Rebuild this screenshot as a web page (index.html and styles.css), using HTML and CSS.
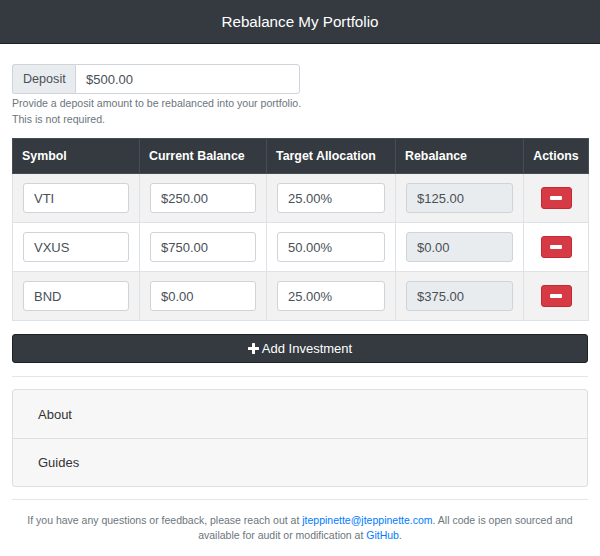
FILE: index.html
```html
<!DOCTYPE html>
<html>
<head>
<meta charset="utf-8">
<link rel="stylesheet" href="styles.css">
</head>
<body>
<header class="topbar">Rebalance My Portfolio</header>
<main class="page">
  <div class="deposit">
    <span class="addon">Deposit</span>
    <input class="field deposit-field" value="$500.00">
  </div>
  <p class="help">Provide a deposit amount to be rebalanced into your portfolio.<br>This is not required.</p>

  <table class="grid">
    <colgroup>
      <col class="c1"><col class="c2"><col class="c3"><col class="c4"><col class="c5">
    </colgroup>
    <thead>
      <tr><th>Symbol</th><th>Current Balance</th><th>Target Allocation</th><th>Rebalance</th><th class="center">Actions</th></tr>
    </thead>
    <tbody>
      <tr class="odd">
        <td><input class="field" value="VTI"></td>
        <td><input class="field" value="$250.00"></td>
        <td><input class="field" value="25.00%"></td>
        <td><input class="field ro" value="$125.00" readonly></td>
        <td class="center"><button class="del"><span class="bar"></span></button></td>
      </tr>
      <tr>
        <td><input class="field" value="VXUS"></td>
        <td><input class="field" value="$750.00"></td>
        <td><input class="field" value="50.00%"></td>
        <td><input class="field ro" value="$0.00" readonly></td>
        <td class="center"><button class="del"><span class="bar"></span></button></td>
      </tr>
      <tr class="odd">
        <td><input class="field" value="BND"></td>
        <td><input class="field" value="$0.00"></td>
        <td><input class="field" value="25.00%"></td>
        <td><input class="field ro" value="$375.00" readonly></td>
        <td class="center"><button class="del"><span class="bar"></span></button></td>
      </tr>
    </tbody>
  </table>

  <button class="add"><svg class="plus" width="11" height="11" viewBox="0 0 11 11"><rect x="4" y="0" width="3" height="11" rx="0.5" fill="#fff"/><rect x="0" y="4" width="11" height="3" rx="0.5" fill="#fff"/></svg>Add Investment</button>

  <hr class="rule">

  <div class="accordion">
    <div class="acc-item">About</div>
    <div class="acc-item">Guides</div>
  </div>

  <hr class="rule rule2">

  <p class="footer">If you have any questions or feedback, please reach out at <a href="#">jteppinette@jteppinette.com</a>. All code is open sourced and available for audit or modification at <a href="#">GitHub</a>.</p>
</main>
</body>
</html>
```

FILE: styles.css
```css
* { box-sizing: border-box; }
html, body { margin: 0; padding: 0; background: #fff; }
body {
  font-family: "Liberation Sans", Arial, sans-serif;
  color: #212529;
  font-size: 13px;
}
.topbar {
  height: 44px;
  background: #343a40;
  border-bottom: 1px solid #1d2124;
  color: #fff;
  font-size: 15.2px;
  display: flex;
  align-items: center;
  justify-content: center;
}
.page { padding: 20px 12px 0; }
.deposit {
  display: flex;
  width: 288px;
  height: 30px;
}
.addon {
  display: flex;
  align-items: center;
  padding: 0 10px;
  width: 63px;
  background: #e9ecef;
  border: 1px solid #ced4da;
  border-right: none;
  border-radius: 3px 0 0 3px;
  color: #495057;
  font-size: 12.6px;
}
.field {
  display: block;
  width: 100%;
  height: 30px;
  border: 1px solid #ced4da;
  border-radius: 3px;
  padding: 0 10px;
  font-family: inherit;
  font-size: 13px;
  color: #495057;
  background: #fff;
  outline: none;
}
.deposit-field { flex: 1; border-radius: 0 3px 3px 0; }
.field.ro { background: #e9ecef; }
.help {
  margin: 1px 0 0;
  font-size: 10.6px;
  line-height: 16px;
  color: #6c757d;
}
.grid {
  margin-top: 11px;
  width: 576px;
  border-collapse: collapse;
  table-layout: fixed;
}
.c1 { width: 127px; } .c2 { width: 127px; } .c3 { width: 129px; } .c4 { width: 128px; } .c5 { width: 65px; }
.grid th {
  background: #343a40;
  color: #fff;
  border: 1px solid #454d55;
  height: 35px;
  padding: 0 9px;
  text-align: left;
  font-size: 12.4px;
  font-weight: bold;
}
.grid td {
  border: 1px solid #dee2e6;
  padding: 9px 10px;
  height: 49px;
}
.grid tr.odd td { background: #f2f2f2; }
.grid .center { text-align: center; }
.del {
  width: 31px;
  height: 22px;
  background: #d63a45;
  border: 1px solid #c42a35;
  border-radius: 3px;
  padding: 0;
  display: inline-flex;
  align-items: center;
  justify-content: center;
  vertical-align: middle;
}
.bar {
  width: 12px;
  height: 4px;
  background: #fff;
  border-radius: 1px;
}
.add {
  margin-top: 13px;
  width: 100%;
  height: 29px;
  background: #343a40;
  border: 1px solid #1d2124;
  border-radius: 3px;
  color: #fff;
  font-family: inherit;
  font-size: 13px;
  display: flex;
  align-items: center;
  justify-content: center;
  gap: 3px;
}
.plus { display: block; }
.rule {
  margin: 13px 0 0;
  border: 0;
  border-top: 1px solid #e5e5e5;
}
.accordion {
  margin-top: 12px;
  border: 1px solid #dfdfdf;
  border-radius: 3px;
  background: #f7f7f7;
}
.acc-item {
  height: 48px;
  display: flex;
  align-items: center;
  padding-left: 25px;
  font-size: 13px;
  color: #333;
}
.acc-item + .acc-item { border-top: 1px solid #dfdfdf; }
.rule2 { margin-top: 12px; }
.footer {
  margin: 13px 0 0;
  text-align: center;
  font-size: 10.5px;
  line-height: 15px;
  color: #6c757d;
  padding: 0 14px;
}
.footer a { color: #007bff; text-decoration: none; }
```
